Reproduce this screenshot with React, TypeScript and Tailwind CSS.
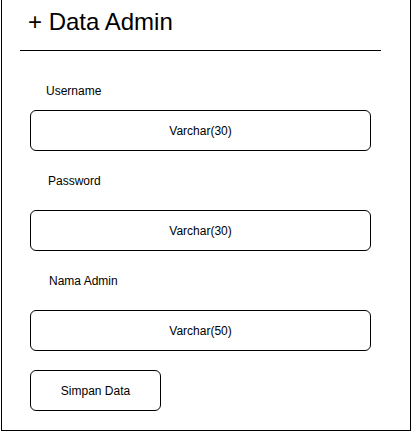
export default function App() {
  const field = "ml-[28px] flex h-[41px] w-[341px] items-center justify-center rounded-md border border-black text-[12px] leading-[14px] text-black";
  return (
    <div className="h-[431px] w-[411px] bg-white" style={{ fontFamily: '"Liberation Sans", Arial, sans-serif' }}>
      <div className="ml-px flex h-[431px] w-[410px] flex-col border-x border-b border-black">
        <h1 className="ml-[26px] mt-[8px] text-[24px] leading-[28px] text-black">+ Data Admin</h1>
        <div className="ml-[18px] mt-[14px] h-px w-[361px] bg-black" />

        <label className="ml-[44px] mt-[33px] text-[12px] leading-[14px] text-black">Username</label>
        <div className={`${field} mt-[12px]`}>Varchar(30)</div>

        <label className="ml-[46px] mt-[23px] text-[12px] leading-[14px] text-black">Password</label>
        <div className={`${field} mt-[22px]`}>Varchar(30)</div>

        <label className="ml-[47px] mt-[23px] text-[12px] leading-[14px] text-black">Nama Admin</label>
        <div className={`${field} mt-[22px]`}>Varchar(50)</div>

        <button className="ml-[28px] mt-[19px] flex h-[41px] w-[131px] items-center justify-center rounded-md border border-black bg-white text-[12px] leading-[14px] text-black">
          Simpan Data
        </button>
      </div>
    </div>
  );
}
